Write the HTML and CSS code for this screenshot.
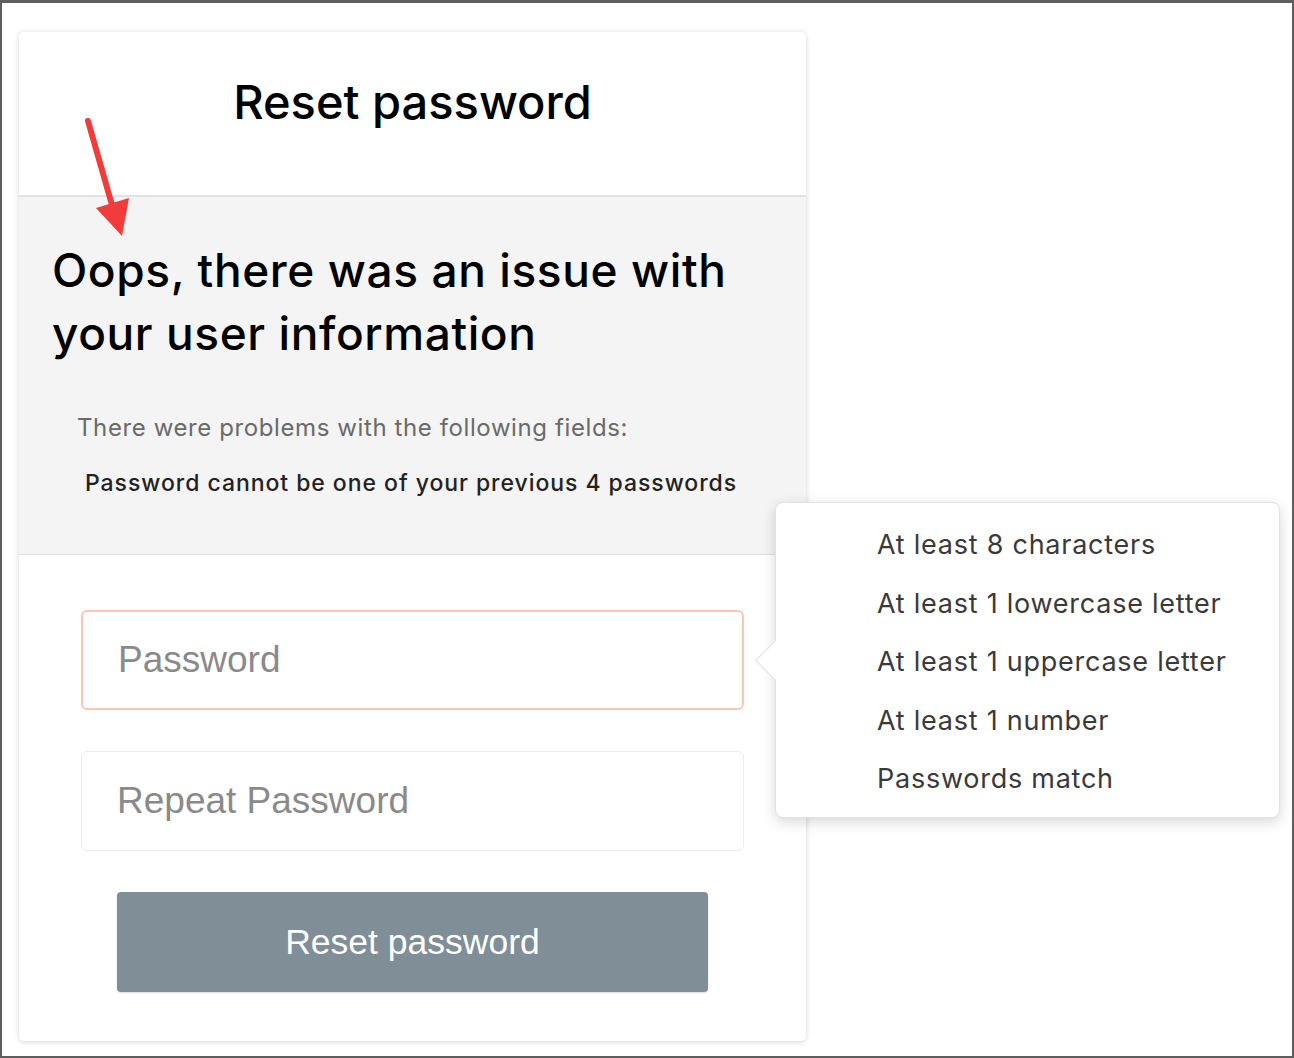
FILE: index.html
```html
<!DOCTYPE html>
<html lang="en">
<head>
<meta charset="utf-8">
<title>Reset password</title>
<link rel="stylesheet" href="styles.css">
</head>
<body>
<div class="frame">
  <div class="card">
    <header class="card-head">
      <h1 class="title">Reset password</h1>
    </header>
    <section class="error-box">
      <h2 class="error-title">Oops, there was an issue with your user information</h2>
      <p class="error-intro">There were problems with the following fields:</p>
      <ul class="error-list">
        <li>Password cannot be one of your previous 4 passwords</li>
      </ul>
    </section>
    <form class="form">
      <input class="field field-error" type="password" placeholder="Password">
      <input class="field" type="password" placeholder="Repeat Password">
      <button class="btn" type="button">Reset password</button>
    </form>

    <div class="popover">
      <ul class="rules">
        <li>At least 8 characters</li>
        <li>At least 1 lowercase letter</li>
        <li>At least 1 uppercase letter</li>
        <li>At least 1 number</li>
        <li>Passwords match</li>
      </ul>
    </div>

    <svg class="annot" width="60" height="130" viewBox="0 0 60 130">
      <line x1="9" y1="6" x2="33" y2="90" stroke="#f23c3c" stroke-width="6" stroke-linecap="round"/>
      <polygon points="17,93 50,83 43,121" fill="#f23c3c"/>
    </svg>
  </div>
</div>
</body>
</html>
```

FILE: styles.css
```css
* { box-sizing: border-box; }
html, body { margin: 0; padding: 0; background: #fff; }
body { font-family: Inter, "Noto Sans", Arial, sans-serif; color: #000; }

.frame {
  width: 1294px;
  height: 1058px;
  border: 2px solid #5e5e5e;
  border-top-width: 3px;
  padding: 29px 0 0 17px;
  display: flex;
  align-items: flex-start;
}

.card {
  position: relative;
  width: 787px;
  height: 1009px;
  background: #fff;
  border-radius: 5px;
  box-shadow: 0 0 6px rgba(0,0,0,0.12), 0 2px 4px rgba(0,0,0,0.06);
  display: flex;
  flex-direction: column;
}

.card-head {
  height: 165px;
  border-bottom: 2px solid #e3e3e3;
  display: flex;
  justify-content: center;
  padding-top: 42px;
}
.title {
  margin: 0;
  font-size: 47px;
  font-weight: 500;
  line-height: 56px;
  letter-spacing: 0;
}

.error-box {
  background: #f4f4f4;
  height: 358px;
  border-bottom: 1px solid #e0e0e0;
  padding: 42px 20px 0 33px;
}
.error-title {
  margin: 0;
  font-size: 46px;
  font-weight: 500;
  line-height: 63px;
  letter-spacing: 0.6px;
}
.error-intro {
  margin: 47px 0 0 25px;
  font-size: 24px;
  letter-spacing: 0.6px;
  color: #6a6a6a;
  line-height: 32px;
}
.error-list {
  list-style: none;
  margin: 23px 0 0 33px;
  padding: 0;
  font-size: 23px;
  letter-spacing: 0.95px;
  font-weight: 500;
  color: #222;
  line-height: 32px;
}

.form {
  flex: 1;
  display: flex;
  flex-direction: column;
  align-items: center;
  padding: 55px 62px 0;
}
.field {
  width: 100%;
  height: 100px;
  border: 1px solid #ececec;
  border-radius: 6px;
  padding: 0 0 0 35px;
  font-family: "Liberation Sans", Arial, sans-serif;
  font-size: 37px;
  color: #333;
  background: #fff;
  outline: none;
}
.field::placeholder { color: #8a8a8a; }
.field-error {
  border: 2px solid #ffc4b4;
  margin-bottom: 41px;
}
.btn {
  margin-top: 41px;
  width: 591px;
  height: 100px;
  border: 0;
  border-radius: 4px;
  background: #7f8e97;
  color: #fff;
  font-family: "Liberation Sans", Arial, sans-serif;
  font-size: 35.5px;
  box-shadow: 0 1px 2px rgba(0,0,0,0.15);
}

.popover {
  position: absolute;
  left: 756px;
  top: 470px;
  width: 505px;
  height: 316px;
  background: #fff;
  border: 1px solid #e2e2e2;
  border-radius: 8px;
  box-shadow: 0 4px 14px rgba(0,0,0,0.16);
  padding: 13px 0 0 101px;
}
.popover::before {
  content: "";
  position: absolute;
  left: -15px;
  top: 143px;
  width: 28px;
  height: 28px;
  background: #fff;
  border-left: 1px solid #e2e2e2;
  border-bottom: 1px solid #e2e2e2;
  transform: rotate(45deg);
}
.rules {
  list-style: none;
  margin: 0;
  padding: 0;
  font-size: 27px;
  letter-spacing: 0.75px;
  color: #3a3a3a;
  line-height: 58.5px;
}

.annot {
  position: absolute;
  left: 60px;
  top: 83px;
  overflow: visible;
}
```
